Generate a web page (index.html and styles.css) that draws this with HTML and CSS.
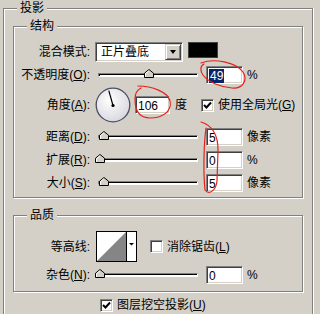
FILE: index.html
```html
<!DOCTYPE html>
<html lang="zh-CN">
<head>
    <meta charset="UTF-8">
    <title>投影</title>
    <link rel="stylesheet" href="styles.css">
</head>
<body>
    <div class="group outer">
        <div class="group-title">投影</div>

        <div class="group inner struct">
            <div class="group-title">结构</div>

            <div class="row row-blend">
                <span class="label">混合模式:</span>
                <div class="select sunken">
                    <span class="select-text">正片叠底</span>
                    <span class="select-btn"><i class="arrow"></i></span>
                </div>
                <span class="swatch"></span>
            </div>

            <div class="row row-opacity">
                <span class="label">不透明度(<u>O</u>):</span>
                <div class="slider">
                    <svg class="thumb" style="left:45px" width="10" height="9" viewBox="0 0 10 9"><polygon points="0.5,8.5 0.5,4.2 5,0.5 9.5,4.2 9.5,8.5" fill="#d4d0c8" stroke="#000"/><polyline points="1.5,8 1.5,4.6 5,1.8" fill="none" stroke="#fff"/></svg>
                </div>
                <span class="field sunken"><span class="sel">49</span></span>
                <span class="unit">%</span>
            </div>

            <div class="row row-angle">
                <span class="label">角度(<u>A</u>):</span>
                <svg class="dial" width="36" height="36" viewBox="0 0 36 36">
                    <defs>
                        <radialGradient id="dialFill" cx="40%" cy="35%" r="70%">
                            <stop offset="0" stop-color="#ffffff"/>
                            <stop offset="1" stop-color="#d6d6de"/>
                        </radialGradient>
                    </defs>
                    <circle cx="18" cy="18" r="16.8" fill="url(#dialFill)" stroke="#4a4e62" stroke-width="1.3"/>
                    <line x1="18" y1="18.5" x2="13.8" y2="3.6" stroke="#000" stroke-width="1.2"/>
                    <circle cx="18" cy="18.5" r="1.6" fill="#000"/>
                </svg>
                <span class="field field-angle sunken">106</span>
                <span class="unit">度</span>
                <span class="check sunken check-global">
                    <svg width="9" height="9" viewBox="0 0 9 9"><polyline points="1,4 3.5,6.5 8,1.5" fill="none" stroke="#000" stroke-width="2"/></svg>
                </span>
                <span class="check-text">使用全局光(<u>G</u>)</span>
            </div>

            <div class="row row-slider">
                <span class="label">距离(<u>D</u>):</span>
                <div class="slider">
                    <svg class="thumb" style="left:0px" width="10" height="9" viewBox="0 0 10 9"><polygon points="0.5,8.5 0.5,4.2 5,0.5 9.5,4.2 9.5,8.5" fill="#d4d0c8" stroke="#000"/><polyline points="1.5,8 1.5,4.6 5,1.8" fill="none" stroke="#fff"/></svg>
                </div>
                <span class="field sunken">5</span>
                <span class="unit">像素</span>
            </div>

            <div class="row row-slider">
                <span class="label">扩展(<u>R</u>):</span>
                <div class="slider">
                    <svg class="thumb" style="left:-4px" width="10" height="9" viewBox="0 0 10 9"><polygon points="0.5,8.5 0.5,4.2 5,0.5 9.5,4.2 9.5,8.5" fill="#d4d0c8" stroke="#000"/><polyline points="1.5,8 1.5,4.6 5,1.8" fill="none" stroke="#fff"/></svg>
                </div>
                <span class="field sunken">0</span>
                <span class="unit">%</span>
            </div>

            <div class="row row-slider">
                <span class="label">大小(<u>S</u>):</span>
                <div class="slider">
                    <svg class="thumb" style="left:0px" width="10" height="9" viewBox="0 0 10 9"><polygon points="0.5,8.5 0.5,4.2 5,0.5 9.5,4.2 9.5,8.5" fill="#d4d0c8" stroke="#000"/><polyline points="1.5,8 1.5,4.6 5,1.8" fill="none" stroke="#fff"/></svg>
                </div>
                <span class="field sunken">5</span>
                <span class="unit">像素</span>
            </div>
        </div>

        <div class="group inner quality">
            <div class="group-title">品质</div>

            <div class="row row-contour">
                <span class="label">等高线:</span>
                <svg class="contour" width="41" height="31" viewBox="0 0 41 31">
                    <rect x="0.5" y="0.5" width="40" height="30" fill="#fff" stroke="#000"/>
                    <polygon points="1,30 30,1 30,30" fill="#858585"/>
                    <line x1="30.5" y1="1" x2="30.5" y2="30" stroke="#000"/>
                    <polygon points="33,12 38,12 35.5,14.5" fill="#000"/>
                </svg>
                <span class="check sunken check-aa"></span>
                <span class="check-text">消除锯齿(<u>L</u>)</span>
            </div>

            <div class="row row-slider row-noise">
                <span class="label">杂色(<u>N</u>):</span>
                <div class="slider">
                    <svg class="thumb" style="left:-4px" width="10" height="9" viewBox="0 0 10 9"><polygon points="0.5,8.5 0.5,4.2 5,0.5 9.5,4.2 9.5,8.5" fill="#d4d0c8" stroke="#000"/><polyline points="1.5,8 1.5,4.6 5,1.8" fill="none" stroke="#fff"/></svg>
                </div>
                <span class="field sunken">0</span>
                <span class="unit">%</span>
            </div>
        </div>

        <div class="row row-knockout">
            <span class="check sunken">
                <svg width="9" height="9" viewBox="0 0 9 9"><polyline points="1,4 3.5,6.5 8,1.5" fill="none" stroke="#000" stroke-width="2"/></svg>
            </span>
            <span class="check-text">图层挖空投影(<u>U</u>)</span>
        </div>
    </div>

    <!-- hand-drawn red marks over the screenshot -->
    <svg class="marks" width="320" height="314" viewBox="0 0 320 314">
        <path d="M201 63 C214 58 236 62 243 72 C248 80 243 89 232 88 C220 87 208 82 203 75 C200 71 200 66 204 64" />
        <path d="M138 86 C152 86 168 92 170 101 C172 112 162 118 150 118 C139 118 135 110 135 99 C135 93 137 90 141 88" />
        <path d="M201 122 C211 125 218 134 218 150 L217 181 C216 191 209 195 205 190 C203 170 204 142 206 128" />
    </svg>
</body>
</html>
```

FILE: styles.css
```css
body {
    margin: 0;
    padding: 8px 0 0 3px;
    background-color: #d4d0c8;
    font-family: 'Liberation Sans', 'Noto Sans CJK SC', sans-serif;
    font-size: 12px;
    line-height: 14px;
    color: #000;
    position: relative;
    height: 314px;
    box-sizing: border-box;
    overflow: hidden;
}
u {
    text-decoration: underline;
}
.group {
    border: 1px solid #808080;
    box-shadow: 1px 1px 0 #fff, inset 1px 1px 0 #fff;
    box-sizing: border-box;
}
/* the outer box runs on below the visible part of the dialog */
.outer {
    width: 310px;
    border-bottom: 0;
    box-shadow: 1px 0 0 #fff, inset 1px 1px 0 #fff;
    padding-bottom: 2px;
}
.inner {
    width: 290px;
    margin: 0 9px;
}
.struct {
    margin-top: 11px;
    padding-bottom: 5px;
}
.quality {
    margin-top: 17px;
    padding-bottom: 7px;
}
.group-title {
    width: fit-content;
    margin: -8px 0 0 13px;
    padding: 0 3px;
    background-color: #d4d0c8;
}
.row {
    display: flex;
    align-items: center;
}
.label {
    width: 76px;
    text-align: right;
    flex-shrink: 0;
}
.sunken {
    box-sizing: border-box;
    border: 1px solid;
    border-color: #808080 #fff #fff #808080;
    box-shadow: inset 1px 1px 0 #404040, inset -1px -1px 0 #d4d0c8;
    background-color: #fff;
}

/* blend mode row */
.row-blend {
    margin-top: 9px;
    height: 20px;
    align-items: flex-start;
}
.row-blend .label {
    line-height: 20px;
}
.select {
    display: flex;
    width: 88px;
    height: 20px;
    margin-left: 5px;
    padding: 1px;
}
.select-text {
    flex: 1;
    padding-left: 4px;
    line-height: 16px;
}
.select-btn {
    width: 16px;
    height: 16px;
    box-sizing: border-box;
    background-color: #d4d0c8;
    border: 1px solid;
    border-color: #d4d0c8 #404040 #404040 #d4d0c8;
    box-shadow: inset 1px 1px 0 #fff, inset -1px -1px 0 #808080;
    display: flex;
    align-items: center;
    justify-content: center;
}
.arrow {
    width: 0;
    height: 0;
    border-left: 3.5px solid transparent;
    border-right: 3.5px solid transparent;
    border-top: 4px solid #000;
}
.swatch {
    width: 30px;
    height: 16px;
    margin-left: 5px;
    box-sizing: border-box;
    background-color: #000;
    border: 1px solid #404040;
}

/* sliders */
.row-opacity {
    margin-top: 3px;
    height: 20px;
}
.row-slider {
    margin-top: 5px;
    height: 18px;
}
.slider {
    position: relative;
    width: 100px;
    height: 4px;
    margin-left: 8px;
    box-sizing: border-box;
    border: 1px solid;
    border-color: #808080 #fff #fff #808080;
    box-shadow: inset 1px 1px 0 #000;
    background-color: #fff;
}
.thumb {
    position: absolute;
    top: -5px;
    display: block;
}
.field {
    width: 37px;
    height: 18px;
    margin-left: 8px;
    padding: 2px 0 0 2px;
    line-height: 14px;
}
.sel {
    background-color: #0a246a;
    color: #fff;
    padding: 0 1px;
    display: inline-block;
}
.unit {
    margin-left: 4px;
}

/* angle row */
.row-angle {
    margin-top: 2px;
    height: 36px;
}
.dial {
    margin-left: 5px;
    display: block;
}
.field-angle {
    width: 35px;
    margin-left: 4px;
}
.row-angle .unit {
    margin-left: 5px;
}
.check {
    width: 13px;
    height: 13px;
    display: flex;
    align-items: center;
    justify-content: center;
    flex-shrink: 0;
}
.check-global {
    margin-left: 14px;
}
.check-text {
    margin-left: 4px;
    white-space: nowrap;
}

/* quality */
.row-contour {
    margin-top: 9px;
    height: 31px;
}
.contour {
    margin-left: 6px;
    display: block;
}
.check-aa {
    margin-left: 13px;
}
.row-noise {
    margin-top: 4px;
}
.row-knockout {
    margin: 6px 0 0 96px;
    height: 14px;
}

.marks {
    position: absolute;
    top: 0;
    left: 0;
    pointer-events: none;
}
.marks path {
    fill: none;
    stroke: #e8201c;
    stroke-width: 1.2;
    stroke-linecap: round;
}
```
